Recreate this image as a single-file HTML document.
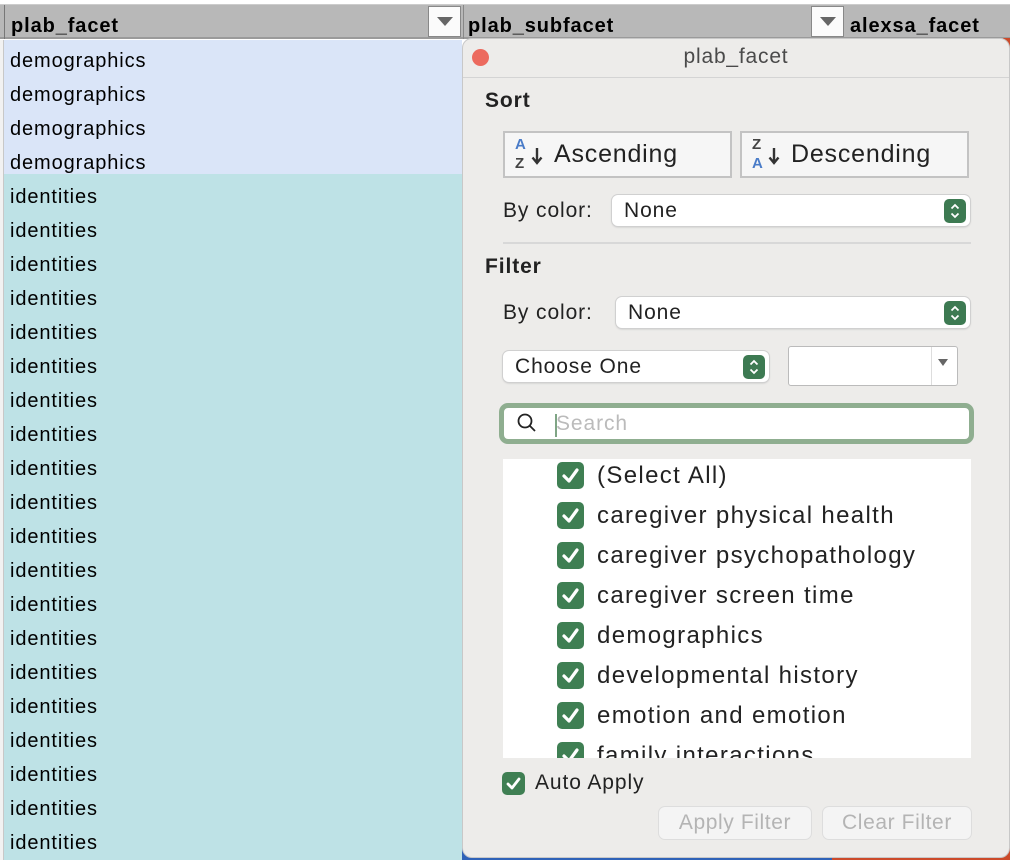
<!DOCTYPE html>
<html><head><meta charset="utf-8"><style>
*{margin:0;padding:0;box-sizing:border-box}
body{width:1010px;height:860px;overflow:hidden;position:relative;background:#fff;font-family:"Liberation Sans",sans-serif}
.abs{position:absolute}
.hdr{top:5px;left:0;width:1010px;height:34px;background:#b8b8b8;border-bottom:2px solid #9a9a9a}
.hd{font-weight:bold;font-size:20px;color:#000;top:15px;letter-spacing:0.9px}
.dd{width:33px;height:31px;background:#fbfbfb;border:1px solid #888;top:6px}
.dd:after{content:"";position:absolute;left:8px;top:10px;border-left:8px solid transparent;border-right:8px solid transparent;border-top:9px solid #666}
.row{left:4px;width:460px;height:34px;font-size:20px;line-height:34px;padding-left:6px;color:#000;letter-spacing:0.9px}
.pop{left:462px;top:38px;width:548px;height:820px;background:#edecea;border-radius:10px;border:1px solid #c8c8c8;font-family:"Liberation Sans",sans-serif;color:#222}
.t{font-size:21px;letter-spacing:0.9px}
.sel{background:#fff;border-radius:6px;box-shadow:0 0 0 1px #d0d0d0,0 1px 2px #bbb;font-size:21px;letter-spacing:0.9px}
.stp{position:absolute;right:4px;top:4px;width:22px;height:24px;background:#3d7a52;border-radius:5px}
.btn{border:2px solid #c3c3c3;background:#f6f6f6;font-size:25px;height:47px;line-height:43px;padding-left:10px;letter-spacing:0.8px}
.cb{width:27px;height:27px;background:#3f7f53;border-radius:5px}
.cb svg{position:absolute;left:4px;top:4px}
.it{font-size:24px;color:#222;letter-spacing:1.35px}
.fb{background:#f4f4f4;border-radius:6px;box-shadow:0 0 0 1px #ddd;color:#b4b4b4;font-size:21px;text-align:center;line-height:32px;height:32px;letter-spacing:0.6px}
</style></head><body>
<div class="abs" style="left:0;top:0;width:1010px;height:5px;background:#fff;border-bottom:1px solid #ccc"></div>
<div class="abs hdr"></div>
<div class="abs" style="left:4px;top:5px;width:1px;height:34px;background:#777"></div>
<div class="abs hd" style="left:11px">plab_facet</div>
<div class="abs dd" style="left:428px"></div>
<div class="abs" style="left:463px;top:5px;width:1px;height:34px;background:#888"></div>
<div class="abs hd" style="left:468px">plab_subfacet</div>
<div class="abs dd" style="left:811px"></div>
<div class="abs hd" style="left:850px">alexsa_facet</div>
<div class="abs" style="left:0;top:40px;width:462px;height:134px;background:#dae5f8"></div>
<div class="abs" style="left:0;top:174px;width:462px;height:686px;background:#bee2e6"></div>
<div class="abs" style="left:0;top:40px;width:4px;height:820px;background:#f2f2f2;border-right:1px solid #c8c8c8"></div>
<div class="abs" style="left:462px;top:845px;width:370px;height:15px;background:#2f62b8"></div>
<div class="abs" style="left:832px;top:845px;width:178px;height:15px;background:#cc4a2a"></div>
<div class="abs" style="left:1003px;top:38px;width:7px;height:20px;background:#cc4a2a"></div>
<div class="abs row" style="top:44px">demographics</div>
<div class="abs row" style="top:78px">demographics</div>
<div class="abs row" style="top:112px">demographics</div>
<div class="abs row" style="top:146px">demographics</div>
<div class="abs row" style="top:180px">identities</div>
<div class="abs row" style="top:214px">identities</div>
<div class="abs row" style="top:248px">identities</div>
<div class="abs row" style="top:282px">identities</div>
<div class="abs row" style="top:316px">identities</div>
<div class="abs row" style="top:350px">identities</div>
<div class="abs row" style="top:384px">identities</div>
<div class="abs row" style="top:418px">identities</div>
<div class="abs row" style="top:452px">identities</div>
<div class="abs row" style="top:486px">identities</div>
<div class="abs row" style="top:520px">identities</div>
<div class="abs row" style="top:554px">identities</div>
<div class="abs row" style="top:588px">identities</div>
<div class="abs row" style="top:622px">identities</div>
<div class="abs row" style="top:656px">identities</div>
<div class="abs row" style="top:690px">identities</div>
<div class="abs row" style="top:724px">identities</div>
<div class="abs row" style="top:758px">identities</div>
<div class="abs row" style="top:792px">identities</div>
<div class="abs row" style="top:826px">identities</div>

<div class="abs pop">
 <div class="abs" style="left:9px;top:10px;width:17px;height:17px;border-radius:50%;background:#ec6a5e"></div>
 <div class="abs" style="left:0;width:546px;top:6px;text-align:center;font-size:21px;color:#4a4a4a;letter-spacing:0.8px">plab_facet</div>
 <div class="abs" style="left:0;top:38px;width:546px;height:1px;background:#d4d4d4"></div>
 <div class="abs t" style="left:22px;top:50px;font-weight:bold">Sort</div>
 <div class="abs btn" style="left:40px;top:92px;width:229px"><span style="position:absolute;left:10px;top:4px;font-size:15px;line-height:15px;font-weight:bold;color:#4a7cc8">A</span><span style="position:absolute;left:10px;top:23px;font-size:15px;line-height:15px;font-weight:bold;color:#444">Z</span><svg style="position:absolute;left:26px;top:14px" width="12" height="18"><path d="M6 1V16M1.5 10.5L6 16L10.5 10.5" fill="none" stroke="#333" stroke-width="2.4"/></svg><span style="position:absolute;left:49px">Ascending</span></div>
 <div class="abs btn" style="left:277px;top:92px;width:229px"><span style="position:absolute;left:10px;top:4px;font-size:15px;line-height:15px;font-weight:bold;color:#444">Z</span><span style="position:absolute;left:10px;top:23px;font-size:15px;line-height:15px;font-weight:bold;color:#4a7cc8">A</span><svg style="position:absolute;left:26px;top:14px" width="12" height="18"><path d="M6 1V16M1.5 10.5L6 16L10.5 10.5" fill="none" stroke="#333" stroke-width="2.4"/></svg><span style="position:absolute;left:49px">Descending</span></div>
 <div class="abs t" style="left:40px;top:160px">By color:</div>
 <div class="abs sel" style="left:149px;top:156px;width:358px;height:31px;padding:4px 12px">None<div class="stp"><svg width="22" height="24"><path d="M7.5 9.5L11 6L14.5 9.5M7.5 14.5L11 18L14.5 14.5" fill="none" stroke="#fff" stroke-width="1.8"/></svg></div></div>
 <div class="abs" style="left:40px;top:203px;width:468px;height:2px;background:#d8d8d8"></div>
 <div class="abs t" style="left:22px;top:216px;font-weight:bold">Filter</div>
 <div class="abs t" style="left:40px;top:262px">By color:</div>
 <div class="abs sel" style="left:153px;top:258px;width:354px;height:31px;padding:4px 12px">None<div class="stp"><svg width="22" height="24"><path d="M7.5 9.5L11 6L14.5 9.5M7.5 14.5L11 18L14.5 14.5" fill="none" stroke="#fff" stroke-width="1.8"/></svg></div></div>
 <div class="abs sel" style="left:40px;top:312px;width:266px;height:31px;padding:4px 12px">Choose One<div class="stp"><svg width="22" height="24"><path d="M7.5 9.5L11 6L14.5 9.5M7.5 14.5L11 18L14.5 14.5" fill="none" stroke="#fff" stroke-width="1.8"/></svg></div></div>
 <div class="abs" style="left:325px;top:307px;width:170px;height:40px;background:#fff;border:1px solid #bbb;border-radius:3px"><div style="position:absolute;left:142px;top:0;width:1px;height:38px;background:#ddd"></div><div style="position:absolute;left:149px;top:12px;border-left:5px solid transparent;border-right:5px solid transparent;border-top:7px solid #666"></div></div>
 <div class="abs" style="left:36px;top:364px;width:475px;height:41px;border:5px solid #8fae90;border-radius:9px;background:#fff">
  <svg class="abs" style="left:12px;top:4px" width="22" height="22" viewBox="0 0 22 22"><circle cx="9" cy="9" r="6.5" fill="none" stroke="#222" stroke-width="1.8"/><line x1="13.5" y1="13.5" x2="19" y2="19" stroke="#222" stroke-width="1.8"/></svg>
  <div class="abs" style="left:51px;top:6px;width:2px;height:23px;background:#7fa585"></div>
  <div class="abs" style="left:52px;top:4px;font-size:21px;color:#bbb;letter-spacing:0.9px">Search</div>
 </div>
 <div class="abs" style="left:40px;top:420px;width:468px;height:299px;background:#fff;overflow:hidden">
  <div class="abs cb" style="left:54px;top:3px"><svg width="19" height="19"><path d="M3 10 L8 15 L16 4" fill="none" stroke="#fff" stroke-width="3.2" stroke-linecap="round" stroke-linejoin="round"/></svg></div><div class="abs it" style="left:94px;top:3px">(Select All)</div>
  <div class="abs cb" style="left:54px;top:43px"><svg width="19" height="19"><path d="M3 10 L8 15 L16 4" fill="none" stroke="#fff" stroke-width="3.2" stroke-linecap="round" stroke-linejoin="round"/></svg></div><div class="abs it" style="left:94px;top:43px">caregiver physical health</div>
  <div class="abs cb" style="left:54px;top:83px"><svg width="19" height="19"><path d="M3 10 L8 15 L16 4" fill="none" stroke="#fff" stroke-width="3.2" stroke-linecap="round" stroke-linejoin="round"/></svg></div><div class="abs it" style="left:94px;top:83px">caregiver psychopathology</div>
  <div class="abs cb" style="left:54px;top:123px"><svg width="19" height="19"><path d="M3 10 L8 15 L16 4" fill="none" stroke="#fff" stroke-width="3.2" stroke-linecap="round" stroke-linejoin="round"/></svg></div><div class="abs it" style="left:94px;top:123px">caregiver screen time</div>
  <div class="abs cb" style="left:54px;top:163px"><svg width="19" height="19"><path d="M3 10 L8 15 L16 4" fill="none" stroke="#fff" stroke-width="3.2" stroke-linecap="round" stroke-linejoin="round"/></svg></div><div class="abs it" style="left:94px;top:163px">demographics</div>
  <div class="abs cb" style="left:54px;top:203px"><svg width="19" height="19"><path d="M3 10 L8 15 L16 4" fill="none" stroke="#fff" stroke-width="3.2" stroke-linecap="round" stroke-linejoin="round"/></svg></div><div class="abs it" style="left:94px;top:203px">developmental history</div>
  <div class="abs cb" style="left:54px;top:243px"><svg width="19" height="19"><path d="M3 10 L8 15 L16 4" fill="none" stroke="#fff" stroke-width="3.2" stroke-linecap="round" stroke-linejoin="round"/></svg></div><div class="abs it" style="left:94px;top:243px">emotion and emotion</div>
  <div class="abs cb" style="left:54px;top:283px"><svg width="19" height="19"><path d="M3 10 L8 15 L16 4" fill="none" stroke="#fff" stroke-width="3.2" stroke-linecap="round" stroke-linejoin="round"/></svg></div><div class="abs it" style="left:94px;top:283px">family interactions</div>
 </div>
 <div class="abs cb" style="left:39px;top:733px;width:23px;height:23px"><svg width="17" height="17" style="left:3px;top:3px"><path d="M3 9 L7 13 L14 4" fill="none" stroke="#fff" stroke-width="2.8" stroke-linecap="round" stroke-linejoin="round"/></svg></div>
 <div class="abs t" style="left:72px;top:732px">Auto Apply</div>
 <div class="abs fb" style="left:196px;top:768px;width:152px">Apply Filter</div>
 <div class="abs fb" style="left:360px;top:768px;width:148px">Clear Filter</div>
</div>
</body></html>
